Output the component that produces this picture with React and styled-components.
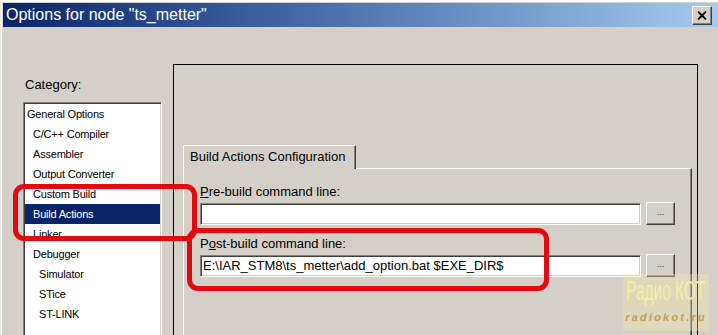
import React from 'react'
import styled, { createGlobalStyle } from 'styled-components'

const categories = [
  { label: 'General Options', level: 0 },
  { label: 'C/C++ Compiler', level: 1 },
  { label: 'Assembler', level: 1 },
  { label: 'Output Converter', level: 1 },
  { label: 'Custom Build', level: 1 },
  { label: 'Build Actions', level: 1, selected: true },
  { label: 'Linker', level: 1 },
  { label: 'Debugger', level: 1 },
  { label: 'Simulator', level: 2 },
  { label: 'STice', level: 2 },
  { label: 'ST-LINK', level: 2 },
]

function App() {
  return (
    <>
      <GlobalStyle />
      <Window>
        <TitleBar>
          <TitleText>Options for node "ts_metter"</TitleText>
          <CloseButton>
            <svg width="10" height="9" viewBox="0 0 10 9">
              <path d="M1 0.5 L9 8.5 M9 0.5 L1 8.5" stroke="#000" strokeWidth="1.8" fill="none" />
            </svg>
          </CloseButton>
        </TitleBar>
        <Body>
          <CategoryColumn>
            <CategoryLabel>Category:</CategoryLabel>
            <ListBox>
              {categories.map((item) => (
                <ListItem key={item.label} $level={item.level} $selected={item.selected}>
                  {item.label}
                </ListItem>
              ))}
            </ListBox>
          </CategoryColumn>
          <OptionsPanel>
            <Tab>Build Actions Configuration</Tab>
            <TabPage>
              <FieldGroup>
                <FieldLabel><u>P</u>re-build command line:</FieldLabel>
                <FieldRow>
                  <TextField />
                  <BrowseButton>...</BrowseButton>
                </FieldRow>
              </FieldGroup>
              <FieldGroup $spaced>
                <FieldLabel>P<u>o</u>st-build command line:</FieldLabel>
                <FieldRow>
                  <TextField>E:\IAR_STM8\ts_metter\add_option.bat $EXE_DIR$</TextField>
                  <BrowseButton>...</BrowseButton>
                </FieldRow>
              </FieldGroup>
            </TabPage>
          </OptionsPanel>
        </Body>

        <Marker $x={12} $y={183} $w={184} $h={57} />
        <Marker $x={186} $y={227} $w={362} $h={63} />

        <Watermark>
          <WatermarkTitle>Радио КОТ</WatermarkTitle>
          <WatermarkSite>radiokot.ru</WatermarkSite>
        </Watermark>
      </Window>
    </>
  )
}

export default App

const GlobalStyle = createGlobalStyle`
    html, body {
        margin: 0;
        padding: 0;
        background: #D4D0C8;
        overflow: hidden;
    }
    * {
        box-sizing: border-box;
    }
`

const Window = styled.div`
    position: relative;
    width: 718px;
    height: 335px;
    overflow: hidden;
    background: #D4D0C8;
    border-top: 1px solid #ffffff;
    border-left: 1px solid #e8e6e0;
    box-shadow: inset 1px 1px 0 #ffffff;
    font-family: "Liberation Sans", Arial, sans-serif;
    display: flex;
    flex-direction: column;
`

const TitleBar = styled.div`
    height: 24px;
    margin: 2px 0 0 2px;
    padding: 0 6px 0 3px;
    background: linear-gradient(to right, #0A246A 0%, #3a5e9e 35%, #A6CAF0 100%);
    display: flex;
    align-items: center;
    justify-content: space-between;
    flex-shrink: 0;
`

const TitleText = styled.span`
    color: #ffffff;
    font-size: 16px;
    line-height: 20px;
`

const CloseButton = styled.div`
    width: 20px;
    height: 19px;
    background: #D4D0C8;
    border-top: 1px solid #ffffff;
    border-left: 1px solid #ffffff;
    border-right: 1px solid #404040;
    border-bottom: 1px solid #404040;
    box-shadow: inset -1px -1px 0 #808080;
    display: flex;
    align-items: center;
    justify-content: center;
`

const Body = styled.div`
    flex: 1;
    display: flex;
    min-height: 0;
`

const CategoryColumn = styled.div`
    width: 172px;
    flex-shrink: 0;
    padding: 50px 0 0 22px;
    display: flex;
    flex-direction: column;
`

const CategoryLabel = styled.div`
    font-size: 13px;
    line-height: 16px;
    color: #000000;
    margin-bottom: 9px;
    padding-left: 2px;
`

const ListBox = styled.div`
    width: 139px;
    flex: 1;
    background: #ffffff;
    border-top: 1px solid #808080;
    border-left: 1px solid #808080;
    border-right: 1px solid #ffffff;
    box-shadow: inset 1px 1px 0 #404040, inset -1px 0 0 #D4D0C8;
    padding: 1px 1px 0 1px;
`

const ListItem = styled.div`
    height: 20px;
    line-height: 20px;
    font-size: 11px;
    letter-spacing: -0.2px;
    white-space: nowrap;
    padding-left: ${(props) => 2 + props.$level * 6}px;
    color: ${(props) => (props.$selected ? '#ffffff' : '#000000')};
    background: ${(props) => (props.$selected ? '#0A246A' : 'transparent')};
`

const OptionsPanel = styled.div`
    width: 525px;
    margin-top: 37px;
    border: 1px solid #000000;
    border-bottom: none;
    padding: 80px 5px 0 9px;
    display: flex;
    flex-direction: column;
`

const Tab = styled.div`
    position: relative;
    z-index: 1;
    align-self: flex-start;
    width: 173px;
    height: 24px;
    margin-bottom: -1px;
    padding-left: 6px;
    background: #D4D0C8;
    border-top: 1px solid #ffffff;
    border-left: 1px solid #ffffff;
    border-right: 1px solid #404040;
    box-shadow: inset -1px 0 0 #808080;
    font-size: 13px;
    line-height: 22px;
    color: #000000;
    white-space: nowrap;
`

const TabPage = styled.div`
    flex: 1;
    border-top: 1px solid #ffffff;
    border-left: 1px solid #ffffff;
    border-right: 1px solid #404040;
    box-shadow: inset -1px 0 0 #808080;
    padding: 15px 16px 0 16px;
`

const FieldGroup = styled.div`
    margin-top: ${(props) => (props.$spaced ? '11px' : '0')};
`

const FieldLabel = styled.div`
    font-size: 13px;
    line-height: 16px;
    color: #000000;
    margin-bottom: 3px;
    white-space: nowrap;
`

const FieldRow = styled.div`
    display: flex;
    align-items: flex-start;
    gap: 5px;
`

const TextField = styled.div`
    flex: 1;
    height: 22px;
    background: #ffffff;
    border-top: 1px solid #808080;
    border-left: 1px solid #808080;
    border-bottom: 1px solid #ffffff;
    border-right: 1px solid #ffffff;
    box-shadow: inset 1px 1px 0 #404040, inset -1px -1px 0 #D4D0C8;
    padding-left: 2px;
    font-size: 13px;
    line-height: 20px;
    color: #000000;
    white-space: nowrap;
    overflow: hidden;
`

const BrowseButton = styled.div`
    width: 29px;
    height: 23px;
    margin-top: -1px;
    background: #D4D0C8;
    border-top: 1px solid #ffffff;
    border-left: 1px solid #ffffff;
    border-right: 1px solid #404040;
    border-bottom: 1px solid #404040;
    box-shadow: inset -1px -1px 0 #808080;
    font-size: 9px;
    line-height: 18px;
    text-align: center;
    color: #333333;
`

const Marker = styled.div`
    position: absolute;
    left: ${(props) => props.$x}px;
    top: ${(props) => props.$y}px;
    width: ${(props) => props.$w}px;
    height: ${(props) => props.$h}px;
    border: 5px solid #e30a0f;
    border-radius: 11px;
    pointer-events: none;
`

const Watermark = styled.div`
    position: absolute;
    left: 622px;
    top: 273px;
    width: 86px;
    height: 57px;
    background: rgba(240, 236, 170, 0.35);
    display: flex;
    flex-direction: column;
    align-items: center;
`

const WatermarkTitle = styled.div`
    font-family: "Liberation Sans", Arial, sans-serif;
    font-size: 28px;
    line-height: 30px;
    margin-top: 2px;
    color: rgba(246, 242, 160, 0.9);
    transform: scaleX(0.55);
    white-space: nowrap;
`

const WatermarkSite = styled.div`
    font-family: "Liberation Sans", Arial, sans-serif;
    font-size: 11px;
    font-style: italic;
    font-weight: bold;
    letter-spacing: 2.2px;
    margin-top: 5px;
    color: #c99a5a;
    white-space: nowrap;
`
